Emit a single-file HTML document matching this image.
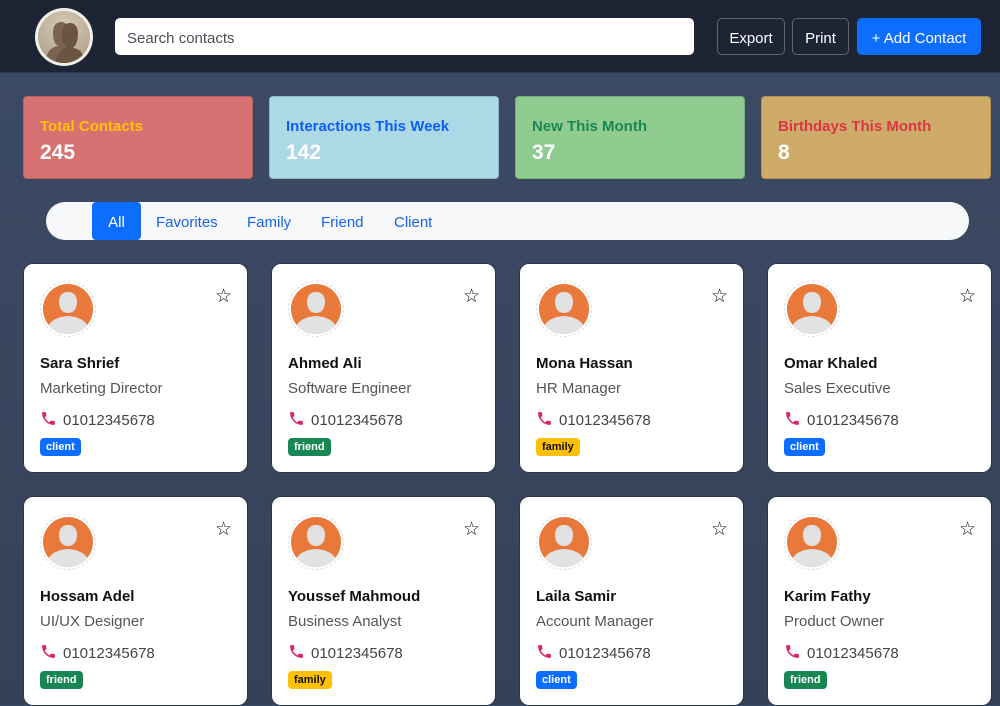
<!DOCTYPE html><html><head><style>
*{box-sizing:border-box;margin:0;padding:0}
body{width:1000px;height:705px;overflow:hidden;font-family:"Liberation Sans",sans-serif;background:linear-gradient(#3c4b64,#344259);position:relative}
.hdr{position:absolute;left:0;top:0;width:1000px;height:73px;background:#1d2535;border-bottom:1px solid #2c3648}
.logo{position:absolute;left:35px;top:8px;width:58px;height:58px;border-radius:50%;background:#f2efe8;padding:3px}
.logo div{width:100%;height:100%;border-radius:50%;background:radial-gradient(circle at 50% 30%,#d6cbb8,#a89a85);overflow:hidden;position:relative}
.search{position:absolute;left:115px;top:18px;width:579px;height:37px;background:#fff;border-radius:5px;font-size:15px;color:#4a4f57;padding:12px 12px 0}
.btn{position:absolute;top:18px;height:37px;border:1px solid #5f6673;border-radius:5px;color:#fff;font-size:15px;text-align:center;line-height:40px}
.stat{position:absolute;top:96px;width:230px;height:83px;border-radius:4px;padding:21px 16px;border:1px solid rgba(0,0,0,.15)}
.stat b{display:block;font-size:15px}
.stat i{display:block;font-style:normal;font-weight:bold;font-size:21px;color:#fff;margin-top:6px}
.pill{position:absolute;left:46px;top:202px;width:923px;height:38px;background:#f7f8fa;border-radius:19px}
.pill span{position:absolute;top:0;height:38px;line-height:41px;color:#1a63e8;font-size:15px}
.card{position:absolute;width:225px;height:210px;background:#fff;border-radius:10px;border:1px solid #2a3548}
.av{position:absolute;left:16px;top:17px;width:56px;height:56px;border-radius:50%;border:1px dashed #ddd;padding:2px}
.av div{width:100%;height:100%;border-radius:50%;background:#e8793a;overflow:hidden;position:relative}
.star{position:absolute;right:15px;top:21px;font-size:19px;color:#111}
.nm{position:absolute;left:16px;top:91px;font-weight:bold;font-size:15px;color:#111}
.tt{position:absolute;left:16px;top:116px;font-size:15px;color:#555}
.ph{position:absolute;left:16px;top:146px;font-size:15px;color:#444}
.ph svg{vertical-align:-2px;margin-right:6px}
.bd{position:absolute;left:16px;top:174px;font-size:11px;font-weight:bold;color:#fff;padding:3px 6px;border-radius:4px}
</style></head><body>
<div class="hdr">
<div class="logo"><div><svg width="52" height="52" viewBox="0 0 52 52"><path d="M8 52 C8 40 14 36 20 35 C16 32 15 28 15 22 C15 15 18 11 23 11 C28 11 31 15 31 22 C31 28 29 32 26 35 C32 36 36 40 36 52Z" fill="#7a6450"/><path d="M18 52 C18 42 24 38 29 37 C25 34 24 29 24 23 C24 16 27 12 32 12 C37 12 40 16 40 23 C40 30 38 34 35 37 C42 38 46 42 46 52Z" fill="#6b5542"/></svg></div></div>
<div class="search">Search contacts</div>
<div class="btn" style="left:717px;width:68px">Export</div>
<div class="btn" style="left:792px;width:57px">Print</div>
<div class="btn" style="left:857px;width:124px;background:#0d6efd;border-color:#0d6efd">+ Add Contact</div>
</div>
<div class="stat" style="left:23px;background:#d87171"><b style="color:#ffc107">Total Contacts</b><i>245</i></div>
<div class="stat" style="left:269px;background:#add8e6"><b style="color:#0d5ef5">Interactions This Week</b><i>142</i></div>
<div class="stat" style="left:515px;background:#90cc90"><b style="color:#198754">New This Month</b><i>37</i></div>
<div class="stat" style="left:761px;background:#cfab6a"><b style="color:#dc3545">Birthdays This Month</b><i>8</i></div>
<div class="pill">
<span style="left:46px;width:49px;background:#0d6efd;color:#fff;text-align:center;border-radius:4px">All</span>
<span style="left:110px">Favorites</span><span style="left:201px">Family</span><span style="left:275px">Friend</span><span style="left:348px">Client</span>
</div>
<div id="cards"></div>
<script>
var d=[["Sara Shrief","Marketing Director","client"],["Ahmed Ali","Software Engineer","friend"],["Mona Hassan","HR Manager","family"],["Omar Khaled","Sales Executive","client"],["Hossam Adel","UI/UX Designer","friend"],["Youssef Mahmoud","Business Analyst","family"],["Laila Samir","Account Manager","client"],["Karim Fathy","Product Owner","friend"]];
var col={client:["#0d6efd","#fff"],friend:["#198754","#fff"],family:["#ffc107","#111"]};
var h="";
d.forEach(function(c,i){var x=23+(i%4)*248,y=263+Math.floor(i/4)*233;var k=col[c[2]];
h+='<div class="card" style="left:'+x+'px;top:'+y+'px"><div class="av"><div><svg width="50" height="50" viewBox="0 0 50 50"><path d="M25 8 C31 8 34 12 34 18 C34 24 31 29 25 29 C19 29 16 24 16 18 C16 12 19 8 25 8Z" fill="#e2e2e2"/><path d="M3 50 C4 38 12 33 25 32 C38 33 46 38 47 50Z" fill="#e2e2e2"/></svg></div></div><div class="star">☆</div><div class="nm">'+c[0]+'</div><div class="tt">'+c[1]+'</div><div class="ph"><svg width="17" height="17" viewBox="0 0 24 24"><path d="M6.6 10.8c1.4 2.8 3.8 5.1 6.6 6.6l2.2-2.2c.3-.3.7-.4 1-.2 1.1.4 2.3.6 3.6.6.6 0 1 .4 1 1V20c0 .6-.4 1-1 1C10.6 21 3 13.4 3 4c0-.6.4-1 1-1h3.5c.6 0 1 .4 1 1 0 1.3.2 2.5.6 3.6.1.3 0 .7-.2 1z" fill="#d6246e"/></svg>01012345678</div><div class="bd" style="background:'+k[0]+';color:'+k[1]+'">'+c[2]+'</div></div>';});
document.getElementById("cards").innerHTML=h;
</script>
</body></html>
